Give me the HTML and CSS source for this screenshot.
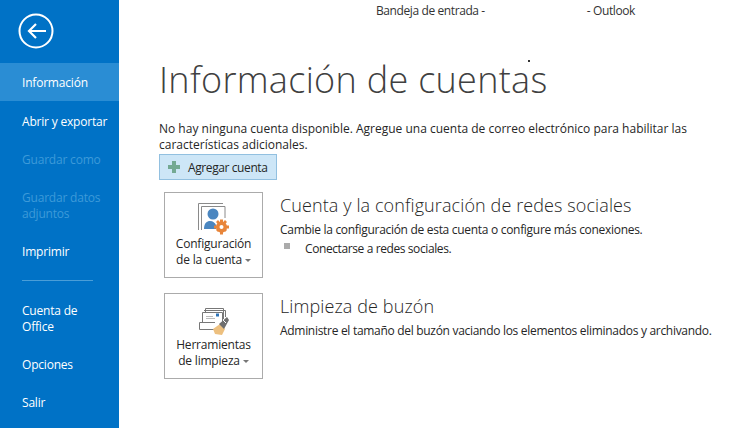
FILE: index.html
```html
<!DOCTYPE html>
<html lang="es">
<head>
<meta charset="utf-8">
<title>Información de cuentas</title>
<link rel="stylesheet" href="styles.css">
</head>
<body>
<div class="app">
  <nav class="side">
    <div class="back">
      <svg width="36" height="36" viewBox="0 0 36 36"><circle cx="18" cy="18" r="16.5" fill="none" stroke="#fff" stroke-width="2"/><path d="M11 18H28M18 11l-7 7 7 7" fill="none" stroke="#fff" stroke-width="2.2"/></svg>
    </div>
    <a class="item active">Información</a>
    <a class="item">Abrir y exportar</a>
    <a class="item off">Guardar como</a>
    <a class="item off tall">Guardar datos<br>adjuntos</a>
    <a class="item">Imprimir</a>
    <div class="sep"></div>
    <a class="item tall">Cuenta de<br>Office</a>
    <a class="item">Opciones</a>
    <a class="item">Salir</a>
  </nav>
  <main class="main">
    <div class="wintitle"><span>Bandeja de entrada -</span><span>- Outlook</span></div>
    <h1 class="title">Información de cuentas</h1>
    <p class="note">No hay ninguna cuenta disponible. Agregue una cuenta de correo electrónico para habilitar las características adicionales.</p>
    <button class="add">
      <svg width="12" height="12" viewBox="0 0 12 12"><path d="M4 0h4v4h4v4H8v4H4V8H0V4h4z" fill="#73a993"/></svg>
      <span>Agregar cuenta</span>
    </button>
    <section class="sec first">
      <div class="tile">
        <svg class="ico" width="34" height="36" viewBox="0 0 34 36">
          <path d="M1.500 28V1.500H26" fill="none" stroke="#8a8a8a"/>
          <path d="M4.500 28V4.500H28V16" fill="none" stroke="#8a8a8a"/>
          <circle cx="16" cy="12" r="5.500" fill="#4a86c0"/>
          <path d="M7 27c0-6 3-8 6-8s5 2 6 4v4z" fill="#4a86c0"/>
          <g fill="#e8853a"><circle cx="24.500" cy="25" r="5.500"/><path d="M23 17.500h3v15h-3zM17 23.500h15v3H17zM19 20l2-2 9 10-2 2zM28 18l2 2-9 10-2-2z"/></g>
          <circle cx="24.500" cy="25" r="2" fill="#fff"/>
        </svg>
        <div class="lbl">Configuración<br>de la cuenta<i class="caret"></i></div>
      </div>
      <div class="body">
        <h2>Cuenta y la configuración de redes sociales</h2>
        <p>Cambie la configuración de esta cuenta o configure más conexiones.</p>
        <div class="bul"><i></i><span>Conectarse a redes sociales.</span></div>
      </div>
    </section>
    <section class="sec">
      <div class="tile">
        <svg class="ico" width="30" height="36" viewBox="0 -5 30 36">
          <path d="M6.500 4V.5h18V11M5 2.500h21.500V9" fill="none" stroke="#777"/>
          <path d="M3.500 14V4.500h20V15" fill="#fff" stroke="#777"/>
          <rect x="17" y="5.500" width="3" height="3" fill="#2f74b8"/>
          <path d="M7 8.500h7M7 10.500h9" stroke="#bbb"/>
          <path d="M.5 21.500V14.500H16M.5 21.500H15" fill="none" stroke="#777"/>
          <path d="M14 21l7-5 5 5-3 6-7-1z" fill="#edc07f"/>
          <path d="M20 16l8-7 2 3-5 9z" fill="#6f6f6f"/>
          <path d="M24 12l3 3" stroke="#fff"/>
        </svg>
        <div class="lbl">Herramientas<br>de limpieza<i class="caret"></i></div>
      </div>
      <div class="body">
        <h2>Limpieza de buzón</h2>
        <p>Administre el tamaño del buzón vaciando los elementos eliminados y archivando.</p>
      </div>
    </section>
  </main>
</div>
</body>
</html>
```
FILE: styles.css
```css
html, body { margin: 0; padding: 0; height: 100%; background: #fff; overflow: hidden; }
body { font-family: "Open Sans", "Noto Sans", sans-serif; color: #262626; }
.app { display: flex; height: 428px; }
.side { width: 119px; flex: none; background: #0072c6; color: #fff; font-size: 12px; letter-spacing: -.2px; }
.back { height: 63px; padding: 13px 0 0 18px; box-sizing: border-box; }
.back svg { display: block; }
.item { display: flex; align-items: center; min-height: 38px; padding: 2px 10px 0 22px; box-sizing: border-box; line-height: 16px; white-space: nowrap; }
.item.active { background: #2a8dd4; margin-bottom: 1px; }
.item.off { color: #3d9ad9; }
.item.tall { min-height: 54px; }
.sep { height: 1px; background: #4a9ed8; margin: 10px 26px 10px 22px; }
.main { flex: 1; min-width: 0; padding: 3px 0 0 40px; }
.wintitle { display: flex; gap: 102px; margin-left: 217px; font-size: 12px; line-height: 16px; color: #333; letter-spacing: -.4px; white-space: nowrap; }
.title { position: relative; margin: 37px 0 0; font-weight: 300; font-size: 36px; line-height: 48px; color: #404040; white-space: nowrap; letter-spacing: .3px; }
.title::after { content: ""; position: absolute; left: 369px; top: 4px; width: 2px; height: 2px; background: #333; }
.note { margin: 17px 0 0; width: 560px; font-size: 12px; line-height: 16px; }
.add { display: flex; align-items: center; gap: 8px; width: 118px; height: 26px; margin: 1px 0 0; padding: 0 0 0 8px; box-sizing: border-box; background: #cde6f7; border: 1px solid #92c0e0; font: inherit; font-size: 12px; color: #262626; letter-spacing: -.4px; }
.sec { display: flex; margin: 0 0 15px 5px; }
.sec.first { margin-top: 12px; }
.tile { width: 99px; height: 86px; flex: none; box-sizing: border-box; border: 1px solid #ababab; display: flex; flex-direction: column; align-items: center; padding-top: 9px; }
.ico { display: block; height: 36px; flex: none; }
.lbl { margin-top: -2px; font-size: 12px; line-height: 16px; text-align: center; white-space: nowrap; letter-spacing: -.2px; }
.caret { display: inline-block; margin-left: 3px; vertical-align: middle; border: 3px solid transparent; border-top-color: #777; border-bottom: 0; }
.body { margin-left: 17px; }
.body h2 { margin: 0; font-weight: 300; font-size: 18px; line-height: 24px; color: #262626; padding-top: 1px; white-space: nowrap; letter-spacing: .1px; }
.body p { margin: 5px 0 0; font-size: 12px; line-height: 16px; white-space: nowrap; letter-spacing: -.3px; }
.bul { display: flex; align-items: center; font-size: 12px; line-height: 16px; margin-top: 3px; letter-spacing: -.4px; }
.bul i { width: 6px; height: 6px; background: #ababab; margin: -6px 15px 0 4px; }
```
